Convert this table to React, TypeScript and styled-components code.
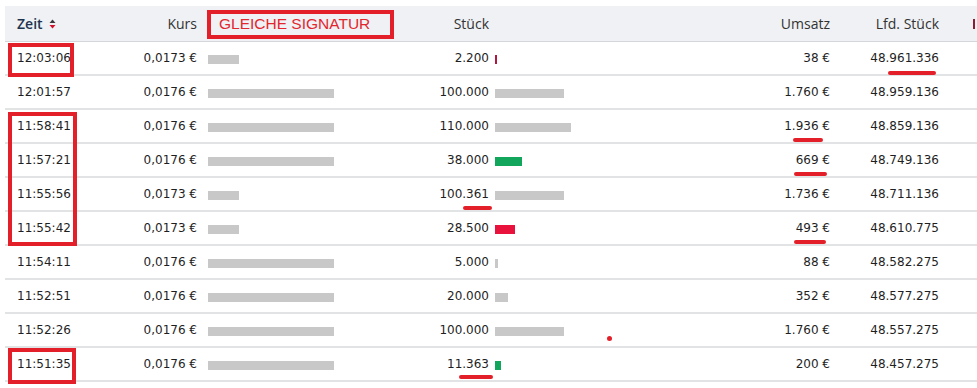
import React from "react";
import styled, { createGlobalStyle } from "styled-components";

const GlobalStyle = createGlobalStyle`
  html, body { margin: 0; padding: 0; background: #ffffff; overflow: hidden; }
  body { font-family: "DejaVu Sans", sans-serif; }
`;

const COLS = "115px 77px 203px 89px 151px 190px 109px 100px";

const Page = styled.div`
  position: relative;
  width: 977px;
  height: 388px;
  padding: 6px 0 0 5px;
  box-sizing: border-box;
  overflow: hidden;
`;

const Table = styled.div`
  width: 1034px;
`;

const HeaderRow = styled.div`
  display: grid;
  grid-template-columns: ${COLS};
  height: 36px;
  box-sizing: border-box;
  background: #eff1f4;
  border-bottom: 1px solid #d3d6da;
  align-items: center;
  font-family: "Open Sans", sans-serif;
  font-size: 14px;
  color: #333;
`;

const Row = styled.div`
  display: grid;
  grid-template-columns: ${COLS};
  height: 34px;
  box-sizing: border-box;
  border-bottom: 2px solid #e2e3e5;
  align-items: center;
  font-family: "DejaVu Sans", sans-serif;
  font-size: 12px;
  color: #1f1f1f;
`;

const Cell = styled.div<{ $align?: "left" | "right"; $pl?: number }>`
  text-align: ${(p) => p.$align ?? "left"};
  padding-left: ${(p) => p.$pl ?? 0}px;
  white-space: nowrap;
  display: flex;
  align-items: center;
  justify-content: ${(p) => (p.$align === "right" ? "flex-end" : "flex-start")};
`;

const SortHead = styled.span`
  font-weight: 600;
  color: #1d3451;
  display: inline-flex;
  align-items: center;
  gap: 6px;
`;

const SortIcon = styled.svg`
  width: 7px;
  height: 10px;
`;

const CutMark = styled.span`
  display: inline-block;
  width: 2px;
  height: 10px;
  background: #8c1d33;
`;

const SignatureBox = styled.div`
  width: 187px;
  height: 29px;
  box-sizing: border-box;
  border: 4px solid #e3202a;
  margin-left: -1px;
  margin-top: 1px;
  font-family: "Liberation Sans", Arial, sans-serif;
  font-size: 15.5px;
  color: #e3262e;
  display: flex;
  align-items: center;
  padding-left: 8px;
`;

const Bar = styled.span<{ $color: string }>`
  display: inline-block;
  height: 9px;
  margin-top: 3px;
  background: ${(p) => p.$color};
`;

const Mark = styled.div<{ $x: number; $y: number; $w: number; $h: number }>`
  position: absolute;
  left: ${(p) => p.$x}px;
  top: ${(p) => p.$y}px;
  width: ${(p) => p.$w}px;
  height: ${(p) => p.$h}px;
  box-sizing: border-box;
  border: 4px solid #e3202a;
  pointer-events: none;
`;

const Underline = styled.div<{ $x: number; $y: number; $w: number }>`
  position: absolute;
  left: ${(p) => p.$x}px;
  top: ${(p) => p.$y}px;
  width: ${(p) => p.$w}px;
  height: 4px;
  border-radius: 2px;
  background: #e3202a;
`;

const Dot = styled.div<{ $x: number; $y: number }>`
  position: absolute;
  left: ${(p) => p.$x}px;
  top: ${(p) => p.$y}px;
  width: 5px;
  height: 5px;
  border-radius: 50%;
  background: #e3202a;
`;

const GRAY = "#c8c8c8";
const GREEN = "#12a65c";
const RED = "#e8123c";
const MAROON = "#b0173f";

type Trade = {
  time: string;
  kurs: string;
  kursBar: number;
  stueck: string;
  bar: number;
  color: string;
  umsatz: string;
  lfd: string;
};

const trades: Trade[] = [
  { time: "12:03:06", kurs: "0,0173 €", kursBar: 31, stueck: "2.200", bar: 2, color: MAROON, umsatz: "38 €", lfd: "48.961.336" },
  { time: "12:01:57", kurs: "0,0176 €", kursBar: 126, stueck: "100.000", bar: 69, color: GRAY, umsatz: "1.760 €", lfd: "48.959.136" },
  { time: "11:58:41", kurs: "0,0176 €", kursBar: 126, stueck: "110.000", bar: 76, color: GRAY, umsatz: "1.936 €", lfd: "48.859.136" },
  { time: "11:57:21", kurs: "0,0176 €", kursBar: 126, stueck: "38.000", bar: 27, color: GREEN, umsatz: "669 €", lfd: "48.749.136" },
  { time: "11:55:56", kurs: "0,0173 €", kursBar: 31, stueck: "100.361", bar: 69, color: GRAY, umsatz: "1.736 €", lfd: "48.711.136" },
  { time: "11:55:42", kurs: "0,0173 €", kursBar: 31, stueck: "28.500", bar: 20, color: RED, umsatz: "493 €", lfd: "48.610.775" },
  { time: "11:54:11", kurs: "0,0176 €", kursBar: 126, stueck: "5.000", bar: 3, color: GRAY, umsatz: "88 €", lfd: "48.582.275" },
  { time: "11:52:51", kurs: "0,0176 €", kursBar: 126, stueck: "20.000", bar: 13, color: GRAY, umsatz: "352 €", lfd: "48.577.275" },
  { time: "11:52:26", kurs: "0,0176 €", kursBar: 126, stueck: "100.000", bar: 69, color: GRAY, umsatz: "1.760 €", lfd: "48.557.275" },
  { time: "11:51:35", kurs: "0,0176 €", kursBar: 126, stueck: "11.363", bar: 6, color: GREEN, umsatz: "200 €", lfd: "48.457.275" },
];

export default function App() {
  return (
    <>
      <GlobalStyle />
      <Page>
        <Table>
          <HeaderRow>
            <Cell $pl={12}>
              <SortHead>
                Zeit
                <SortIcon viewBox="0 0 7 10">
                  <path d="M3.5 0.5 L6.5 4 L0.5 4 Z" fill="#3a3a3a" />
                  <path d="M0.5 6 L6.5 6 L3.5 9.5 Z" fill="#d0112b" />
                </SortIcon>
              </SortHead>
            </Cell>
            <Cell $align="right">Kurs</Cell>
            <Cell $pl={11}>
              <SignatureBox>GLEICHE SIGNATUR</SignatureBox>
            </Cell>
            <Cell $align="right">Stück</Cell>
            <Cell />
            <Cell $align="right">Umsatz</Cell>
            <Cell $align="right">Lfd. Stück</Cell>
            <Cell $pl={34}>
              <CutMark />
            </Cell>
          </HeaderRow>
          {trades.map((t) => (
            <Row key={t.time + t.lfd}>
              <Cell $pl={12}>{t.time}</Cell>
              <Cell $align="right">{t.kurs}</Cell>
              <Cell $pl={11}>
                <Bar $color={GRAY} style={{ width: t.kursBar }} />
              </Cell>
              <Cell $align="right">{t.stueck}</Cell>
              <Cell $pl={6}>
                <Bar $color={t.color} style={{ width: t.bar }} />
              </Cell>
              <Cell $align="right">{t.umsatz}</Cell>
              <Cell $align="right">{t.lfd}</Cell>
              <Cell />
            </Row>
          ))}
        </Table>
        <Mark $x={8} $y={43} $w={66} $h={34} />
        <Mark $x={8} $y={112} $w={69} $h={134} />
        <Mark $x={8} $y={348} $w={68} $h={36} />
        <Underline $x={888} $y={71} $w={48} />
        <Underline $x={793} $y={138} $w={30} />
        <Underline $x={794} $y={172} $w={33} />
        <Underline $x={463} $y={206} $w={29} />
        <Underline $x={794} $y={240} $w={32} />
        <Underline $x={459} $y={375} $w={34} />
        <Dot $x={607} $y={336} />
      </Page>
    </>
  );
}
